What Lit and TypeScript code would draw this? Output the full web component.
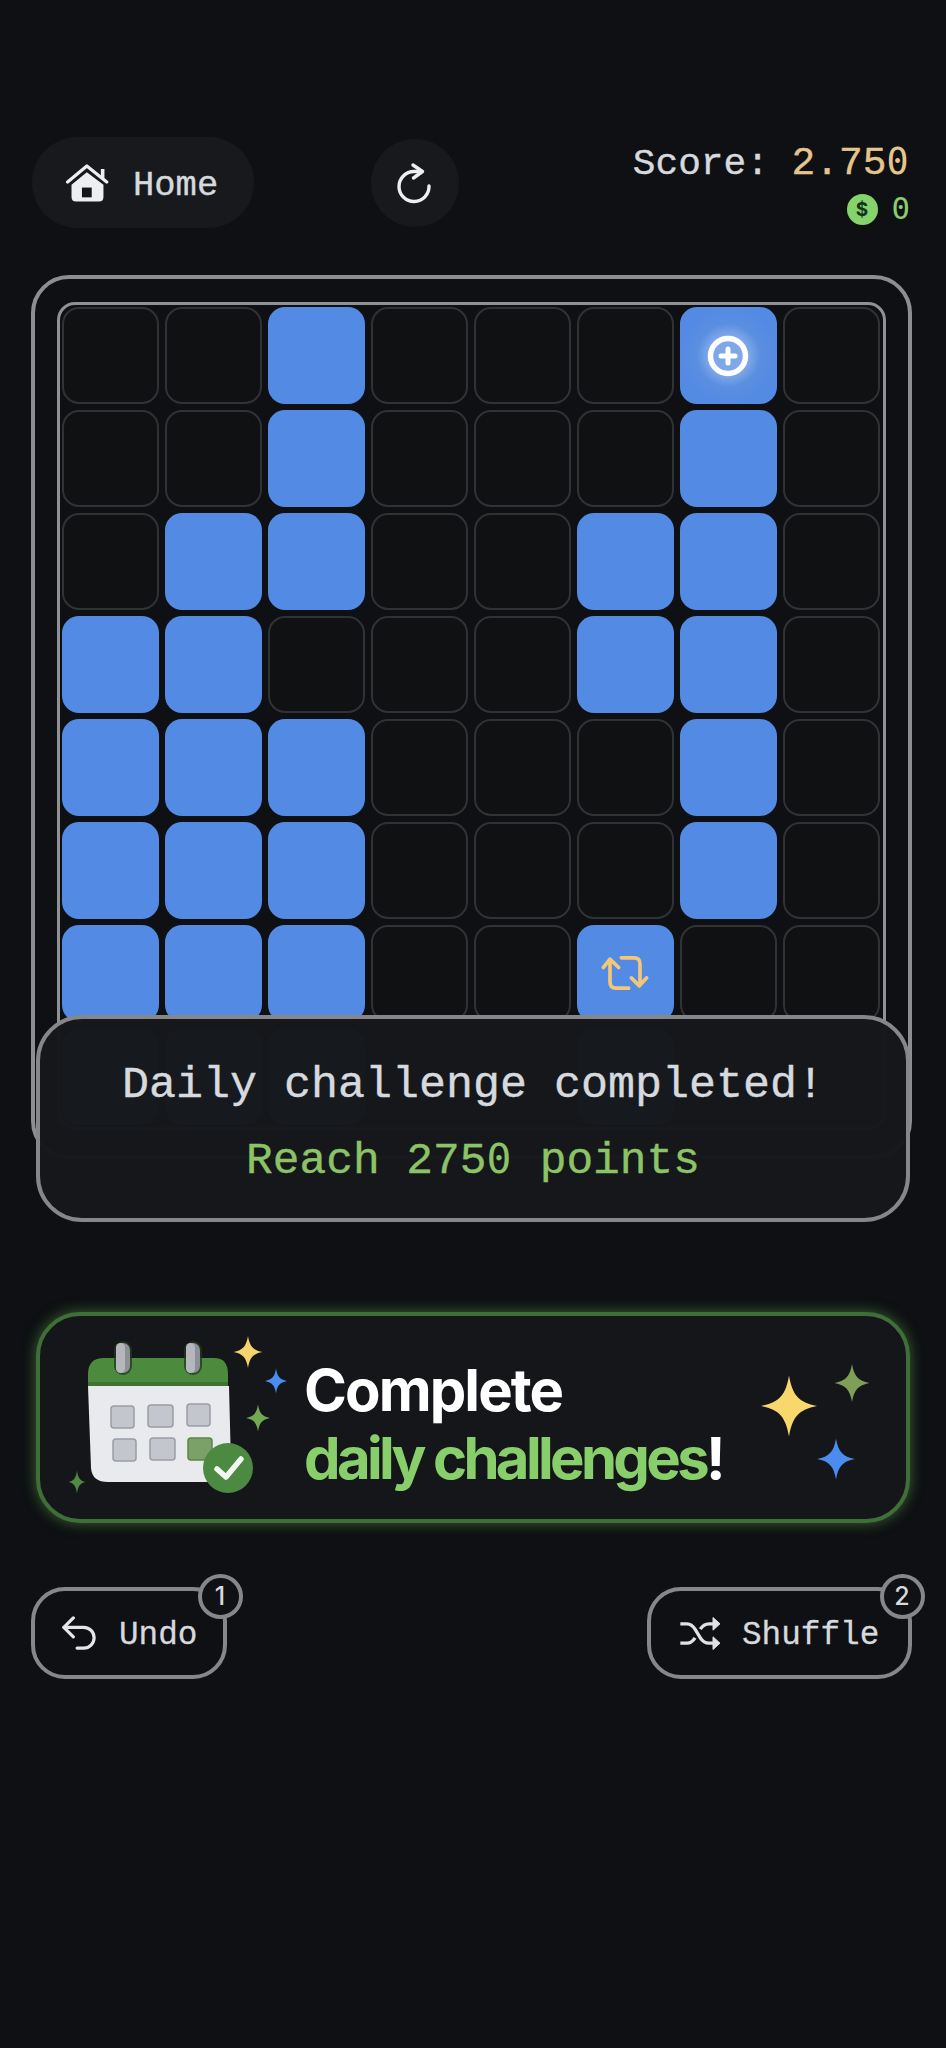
import { LitElement, html, css, svg } from "lit";
import { customElement } from "lit/decorators.js";

const ROWS = ["..#...+.", "..#...#.", ".##..##.", "##...##.", "###...#.", "###...#.", "###..r..", "###..#.."];

const star = (cx: number, cy: number, w: number, h: number, fill: string) => {
  const a = w / 2, b = h / 2, p = 0.12;
  const d = `M${cx} ${cy - b}C${cx + a * p} ${cy - b * 0.35} ${cx + a * 0.35} ${cy - b * p} ${cx + a} ${cy}` +
    `C${cx + a * 0.35} ${cy + b * p} ${cx + a * p} ${cy + b * 0.35} ${cx} ${cy + b}` +
    `C${cx - a * p} ${cy + b * 0.35} ${cx - a * 0.35} ${cy + b * p} ${cx - a} ${cy}` +
    `C${cx - a * 0.35} ${cy - b * p} ${cx - a * p} ${cy - b * 0.35} ${cx} ${cy - b}Z`;
  return svg`<path d=${d} fill=${fill}></path>`;
};

const SQUARES = [
  [111, 1406, 23, 22], [148, 1405, 25, 22], [187, 1404, 23, 22],
  [113, 1439, 23, 22], [150, 1438, 25, 22], [188, 1438, 24, 22],
];

const ring = (x: number) => svg`
  <rect x=${x - 9} y="1341" width="18" height="34" rx="9" fill="#1f3a1c" opacity="0.75"></rect>
  <rect x=${x - 7} y="1343" width="14" height="30" rx="7" fill="#8d9096"></rect>
  <rect x=${x - 7} y="1343" width="9" height="30" rx="4.5" fill="#b4b7bc"></rect>`;

@customElement("app-root")
export class AppRoot extends LitElement {
  static styles = css`
    :host {
      display: block;
      height: 2048px;
      background: #0e1013;
      color: #d6d9de;
      font-family: "Liberation Mono", monospace;
      overflow: hidden;
    }
    .page { padding: 137px 0 0; display: flex; flex-direction: column; }
    .z { font-family: "DejaVu Sans Mono", monospace; font-size: 0.93em; letter-spacing: 0.04em; line-height: 0; -webkit-text-stroke: 0; }
    .header { display: flex; align-items: flex-start; padding: 0 36px 0 32px; height: 90px; margin-bottom: 48px; }
    .home {
      width: 222px; height: 91px; border-radius: 46px; background: #17191c;
      display: flex; align-items: center; padding-left: 33px; box-sizing: border-box; gap: 24px;
      font-size: 35.5px; -webkit-text-stroke: 0.4px #d6d9de;
    }
    .home svg { width: 44px; height: 40px; flex: none; }
    .home span { padding-top: 5px; }
    .refresh {
      width: 88px; height: 88px; border-radius: 50%; background: #17191c; margin: 2px 0 0 117px;
      display: flex; align-items: center; justify-content: center;
    }
    .score-box { margin-left: auto; margin-top: 5px; display: flex; flex-direction: column; align-items: flex-end; }
    .score { font-size: 37.8px; line-height: 44px; white-space: pre; -webkit-text-stroke: 0.4px currentColor; }
    .score b { font-weight: 400; font-size: 39.5px; line-height: 0; color: #e4c68c; }
    .coins { display: flex; align-items: center; gap: 14px; color: #8ccb6f; font-size: 33px; margin-top: 7px; height: 32px; }
    .coin {
      width: 31px; height: 31px; border-radius: 50%; background: #85d36a; color: #10331a;
      font: 700 19px/31px "Inter", sans-serif; text-align: center;
    }
    .coins .z { letter-spacing: 0; line-height: 32px; }

    .board-wrap { position: relative; margin-left: 31px; width: 881px; }
    .board {
      box-sizing: border-box; height: 884px; border: 4px solid #8c8e91; border-radius: 38px;
      padding: 23px 22px;
    }
    .grid {
      border: 3px solid #8f9194; border-radius: 18px; padding: 2px;
      display: grid; grid-template-columns: repeat(8, 97px); grid-auto-rows: 97px; gap: 6px 5.95px;
    }
    .cell { border: 2px solid #303236; border-radius: 17px; background: #0f1113; box-sizing: border-box; display: flex; align-items: center; justify-content: center; }
    .cell.on { border: none; background: #538ae4; }
    .cell.glow { background: radial-gradient(circle at 50% 50%, #7fa8e8 0 20px, #5a8ee0 32px, #538ae4 50px); }
    .popup {
      position: absolute; left: 5px; top: 740px; width: 874px; height: 207px; box-sizing: border-box;
      border: 4px solid #85878b; border-radius: 46px; background: rgba(21, 23, 26, 0.99);
      display: flex; flex-direction: column; align-items: center; padding-top: 42px;
    }
    .popup div { line-height: 50px; white-space: pre; font-size: 45px; -webkit-text-stroke: 0.4px currentColor; }
    .popup .goal { color: #8cc366; margin-top: 25px; font-size: 44.5px; }

    .banner {
      box-sizing: border-box; margin: 153px 0 0 36px; width: 874px; height: 211px;
      border: 4px solid #3f6f38; border-radius: 44px; background: #141619;
      box-shadow: 0 0 14px rgba(96, 170, 76, 0.55);
      display: flex; align-items: center; padding-left: 22px; padding-right: 36px;
    }
    .banner svg { flex: none; display: block; }
    .headline {
      margin-left: 12px; padding-top: 12px; font-family: "Inter", sans-serif; font-weight: 700; font-size: 58px; line-height: 68px;
      letter-spacing: -1.9px; color: #fff; white-space: nowrap;
    }
    .line2 { letter-spacing: -3.66px; }
    .line2 span { color: #88cf6c; }
    .banner .right { margin-left: auto; }

    .actions { display: flex; justify-content: space-between; padding: 0 34px 0 31px; margin-top: 64px; }
    .btn {
      position: relative; height: 92px; box-sizing: border-box; border: 4px solid #85878b; border-radius: 34px;
      display: flex; align-items: center; font-size: 32.7px; -webkit-text-stroke: 0.3px currentColor;
    }
    .btn .t { padding-top: 5px; }
    .undo { width: 196px; padding-left: 27px; gap: 23px; }
    .shuffle { width: 265px; padding-left: 28px; gap: 21px; }
    .badge {
      position: absolute; top: -17.5px; right: -19.5px; width: 45px; height: 45px; box-sizing: border-box;
      border: 4px solid #85878b; border-radius: 50%; background: #0f1114;
      display: flex; align-items: center; justify-content: center;
      font: 500 25px "Inter", sans-serif; -webkit-text-stroke: 0;
    }
    .shuffle .badge { right: -16.5px; }
  `;

  private renderCell(c: string) {
    if (c === ".") return html`<div class="cell"></div>`;
    if (c === "+")
      return html`<div class="cell on glow">
        <svg width="44" height="44" viewBox="0 0 44 44" fill="none" stroke="#fff" stroke-linecap="round">
          <circle cx="22" cy="22" r="17.5" stroke-width="5.5"></circle>
          <path d="M22 15v14M15 22h14" stroke-width="5"></path>
        </svg>
      </div>`;
    if (c === "r")
      return html`<div class="cell on">
        <svg width="50" height="37" viewBox="120 168 150 110" fill="none" stroke="#f3c679" stroke-width="11" stroke-linecap="round" stroke-linejoin="round">
          <path d="M130 205 150 180 176 205M150 180V248Q150 267 168 267H206M184 176H222Q240 176 240 194V258M214 236 238 260 260 236"></path>
        </svg>
      </div>`;
    return html`<div class="cell on"></div>`;
  }

  render() {
    return html`<div class="page">
      <div class="header">
        <div class="home">
          <svg viewBox="198 158 135 122">
            <path d="M218 224 265 186 316 224V262Q316 276 302 276H232Q218 276 218 262Z" fill="#eceef1"></path>
            <path d="M206 216 265 167 326 216" fill="none" stroke="#eceef1" stroke-width="10" stroke-linecap="round" stroke-linejoin="round"></path>
            <path d="M308 176h11v30h-11z" fill="#eceef1"></path>
            <path d="M250 233h30v30h-30z" fill="#14161a"></path>
          </svg>
          <span>Home</span>
        </div>
        <div class="refresh">
          <svg width="44" height="48" viewBox="0 0 44 48" fill="none" stroke="#eceef1" stroke-width="3.4" stroke-linecap="round" stroke-linejoin="round">
            <path d="M28 12.5H21A15 15 0 1 0 36 27"></path>
            <path d="M20 6 29.5 12.5 20.5 19"></path>
          </svg>
        </div>
        <div class="score-box">
          <div class="score">Score: <b>2.75<span class="z">0</span></b></div>
          <div class="coins"><span class="coin">$</span><span class="z">0</span></div>
        </div>
      </div>

      <div class="board-wrap">
        <div class="board">
          <div class="grid">
            ${ROWS.map((r) => r.split("").map((c) => this.renderCell(c)))}
          </div>
        </div>
        <div class="popup">
          <div>Daily challenge completed!</div>
          <div class="goal">Reach 275<span class="z">0</span> points</div>
        </div>
      </div>

      <div class="banner">
        <svg width="230" height="165" viewBox="62 1335 230 165">
          <path d="M88 1386V1374Q88 1358 104 1358H214Q228 1358 228 1374V1386Z" fill="#4c8a3d"></path>
          <path d="M88 1382H228V1386H88Z" fill="#3c7331"></path>
          <path d="M88 1386H229L231 1465Q231 1482 216 1482H108Q92 1482 91 1468Z" fill="#e9eaed"></path>
          ${ring(123)}
          ${ring(193)}
          ${SQUARES.map(([x, y, w, h], i) => svg`<rect x=${x} y=${y} width=${w} height=${h} rx="3" fill=${i === 5 ? "#7ba068" : "#c3c6cc"} stroke=${i === 5 ? "#5b8549" : "#9a9da3"} stroke-width="1.5"></rect>`)}
          <circle cx="228" cy="1468" r="25" fill="#4b8a40"></circle>
          <path d="M217 1469 226 1477 241 1459" fill="none" stroke="#f4f6f4" stroke-width="5.5" stroke-linecap="round" stroke-linejoin="round"></path>
          ${star(248, 1352, 29, 32, "#f6d36b")}
          ${star(276, 1381, 22, 25, "#4a8cf0")}
          ${star(258, 1418, 24, 27, "#73a852")}
          ${star(77, 1482, 17, 23, "#4d8a42")}
        </svg>
        <div class="headline">Complete<div class="line2"><span>daily challenges</span>!</div></div>
        <svg class="right" width="110" height="141" viewBox="760 1347 110 141">
          ${star(789, 1406, 56, 61, "#f8d76d")}
          ${star(852, 1383, 35, 38, "#7f9e57")}
          ${star(836, 1459, 38, 41, "#4a8cf0")}
        </svg>
      </div>

      <div class="actions">
        <div class="btn undo">
          <svg width="34" height="34" viewBox="3 3 18 18" fill="none" stroke="#e4e6ea" stroke-width="1.7" stroke-linecap="round" stroke-linejoin="round">
            <path d="M9 14 4 9l5-5"></path>
            <path d="M4 9h10.5a5.5 5.5 0 0 1 5.5 5.5 5.5 5.5 0 0 1-5.5 5.5H11"></path>
          </svg>
          <span class="t">Undo</span>
          <span class="badge">1</span>
        </div>
        <div class="btn shuffle">
          <svg width="42" height="35" viewBox="234 168 126 102" fill="none" stroke="#dfe1e5" stroke-width="10" stroke-linejoin="round">
            <path d="M238 190H258Q272 190 282 206L298 232Q308 248 324 248H345M238 248H258Q272 248 282 232M298 206Q308 190 324 190H345"></path>
            <path d="M336 171 357 190 336 209ZM336 229 357 248 336 267Z" fill="#dfe1e5" stroke-width="3"></path>
          </svg>
          <span class="t">Shuffle</span>
          <span class="badge">2</span>
        </div>
      </div>
    </div>`;
  }
}
